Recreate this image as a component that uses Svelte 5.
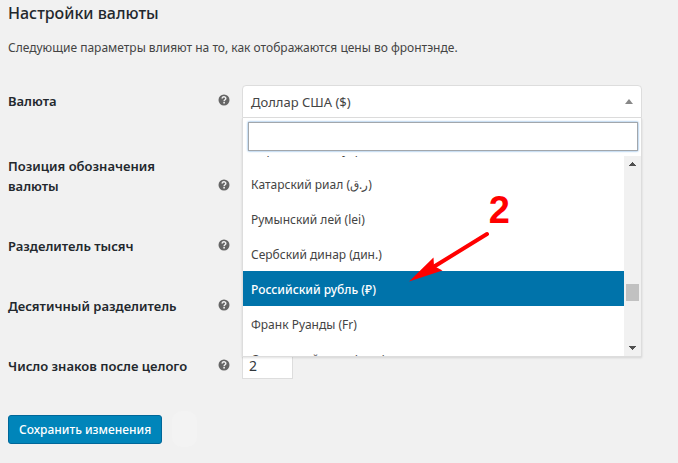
<script lang="ts">
	const currencies = [
		'Парагвайский гуарани (₲)',
		'Катарский риал (ر.ق)',
		'Румынский лей (lei)',
		'Сербский динар (дин.)',
		'Российский рубль (₽)',
		'Франк Руанды (Fr)',
		'Саудовский риял (ر.س)'
	];

	let selected = $state('Доллар США ($)');
	let highlighted = $state(4);
	let open = $state(true);
	let search = $state('');
	let decimals = $state('2');
</script>

{#snippet help(text: string)}
	<svg class="help" viewBox="0 0 12 12" role="img" aria-label={text}>
		<circle cx="6" cy="6" r="5.5" fill="#666" />
		<path d="M4.2 4.6C4.2 2.3 7.8 2.3 7.8 4.5C7.8 5.8 6.1 5.7 6.1 7.2" fill="none" stroke="#f1f1f1" stroke-width="1.5" />
		<rect x="5.3" y="8" width="1.6" height="1.5" fill="#f1f1f1" />
	</svg>
{/snippet}

<form onsubmit={(e) => e.preventDefault()}>
	<h2>Настройки валюты</h2>
	<p>Следующие параметры влияют на то, как отображаются цены во фронтэнде.</p>

	<div class="row first">
		<label for="currency">Валюта</label>
		{@render help('Валюта')}
		<div class="field">
			<button type="button" id="currency" class="selection" aria-expanded={open} onclick={() => (open = !open)}>
				<span>{selected}</span>
				<svg class="caret" viewBox="0 0 8 5"><path d="M4 0L8 5H0Z" fill="#888" /></svg>
			</button>
			{#if open}
				<div class="dropdown">
					<input class="search" type="text" aria-label="Поиск" bind:value={search} />
					<div class="results">
						<div class="options" role="listbox" aria-label="Валюта">
							{#each currencies as name, i}
								<button
									type="button"
									role="option"
									class="option"
									class:highlighted={i === highlighted}
									aria-selected={i === highlighted}
									onmouseenter={() => (highlighted = i)}
									onclick={() => (selected = name)}>{name}</button
								>
							{/each}
						</div>
						<div class="scrollbar">
							<svg viewBox="0 0 17 17"><path d="M8 6H9V7H10V8H11V9H12V10H5V9H6V8H7V7H8Z" fill="#505050" /></svg>
							<span class="thumb"></span>
							<svg viewBox="0 0 17 17"><path d="M5 7H12V8H11V9H10V10H9V11H8V10H7V9H6V8H5Z" fill="#505050" /></svg>
						</div>
					</div>
					<div class="note">
						<span>2</span>
						<svg viewBox="0 0 80 52">
							<path d="M77 2L25 34" stroke="#f00" stroke-width="4" stroke-linecap="round" />
							<path d="M-1 49.5L23.5 25.5L24 34L32.5 38.5Z" fill="#f00" />
						</svg>
					</div>
				</div>
			{/if}
		</div>
	</div>
	<div class="row">
		<span class="label">Позиция обозначения валюты</span>
		{@render help('Позиция обозначения валюты')}
	</div>
	<div class="row">
		<span class="label">Разделитель тысяч</span>
		{@render help('Разделитель тысяч')}
	</div>
	<div class="row">
		<span class="label">Десятичный разделитель</span>
		{@render help('Десятичный разделитель')}
	</div>
	<div class="row">
		<label for="decimals">Число знаков после целого</label>
		{@render help('Число знаков после целого')}
		<div class="field">
			<input id="decimals" class="decimals" type="text" bind:value={decimals} />
		</div>
	</div>

	<div class="submit">
		<button type="submit" class="save">Сохранить изменения</button>
		<span class="smudge"></span>
	</div>
</form>

<style>
	:global(body) {
		margin: 0;
		background: #f1f1f1;
	}
	form,
	button,
	input {
		font-family: 'Noto Sans', 'Open Sans', sans-serif;
	}
	form {
		padding: 0 36px 18px 8px;
		color: #444;
		font-size: 13px;
		line-height: 20px;
	}
	h2 {
		margin: 0;
		padding-top: 3px;
		color: #23282d;
		font-size: 16px;
		font-weight: 500;
		line-height: 20px;
	}
	p {
		margin: 15px 0 13px;
		font-size: 12px;
	}
	.row {
		display: flex;
		align-items: flex-end;
		padding: 20px 0;
	}
	.first {
		padding-bottom: 25px;
	}
	.row label,
	.label {
		box-sizing: border-box;
		width: 210px;
		padding-right: 24px;
		color: #23282d;
		font-size: 13px;
		font-weight: 600;
	}
	.help {
		flex: none;
		width: 12px;
		height: 12px;
		margin: 0 12px 5px 0;
	}
	.field {
		position: relative;
		flex: 1;
		height: 20px;
	}
	.selection {
		display: flex;
		align-items: center;
		justify-content: space-between;
		box-sizing: border-box;
		width: 100%;
		height: 33px;
		margin-top: -6px;
		padding: 0 8px;
		border: 1px solid #ddd;
		border-radius: 4px 4px 0 0;
		background: #fff;
		color: #444;
		font-size: 13px;
	}
	.caret {
		width: 8px;
		height: 5px;
	}
	.dropdown {
		position: absolute;
		z-index: 1;
		top: 27px;
		left: 0;
		right: 0;
		box-sizing: border-box;
		padding: 4px 0 0;
		border: 1px solid #ddd;
		border-top: 0;
		background: #fff;
		box-shadow: 0 1px 2px rgba(0, 0, 0, 0.12);
	}
	.search {
		display: block;
		box-sizing: border-box;
		width: calc(100% - 8px);
		height: 29px;
		margin: 0 3px 5px 5px;
		padding: 4px;
		border: 1px solid #a2a7ac;
		outline: none;
		box-shadow: 0 0 2px #5b9dd9;
	}
	.results {
		display: flex;
		height: 200px;
		overflow: hidden;
	}
	.options {
		flex: 1;
		margin-top: -25px;
	}
	.option {
		display: block;
		width: 100%;
		height: 35px;
		padding: 2px 8px 0;
		border: 0;
		background: #fff;
		color: #444;
		font-size: 12px;
		text-align: left;
	}
	.option.highlighted {
		background: #0073aa;
		color: #fff;
		font-weight: 500;
	}
	.scrollbar {
		display: flex;
		flex-direction: column;
		width: 17px;
		background: #f1f1f1;
	}
	.scrollbar svg {
		width: 17px;
		height: 17px;
	}
	.thumb {
		height: 17px;
		margin: 111px 2px auto;
		background: #c1c1c1;
	}
	.note {
		position: absolute;
		top: 70px;
		left: 167px;
		width: 100px;
		pointer-events: none;
	}
	.note span {
		display: block;
		color: #f00;
		font: bold 38px/44px 'Liberation Sans', sans-serif;
		text-align: right;
	}
	.note svg {
		display: block;
		overflow: visible;
		width: 80px;
		height: 52px;
	}
	.decimals {
		display: block;
		box-sizing: border-box;
		width: 51px;
		height: 28px;
		margin-top: -5px;
		padding: 3px 6px;
		border: 1px solid #ddd;
		background: #fff;
		color: #32373c;
		font-size: 14px;
	}
	.submit {
		display: flex;
		align-items: center;
		gap: 10px;
		padding-top: 15px;
	}
	.save {
		height: 29px;
		padding: 0 10px;
		border: 1px solid #006799;
		border-radius: 3px;
		background: #0085ba;
		color: #fff;
		font-size: 12px;
		font-weight: 500;
	}
	.smudge {
		width: 25px;
		height: 36px;
		border-radius: 10px;
		background: #f3f3f3;
	}
</style>
